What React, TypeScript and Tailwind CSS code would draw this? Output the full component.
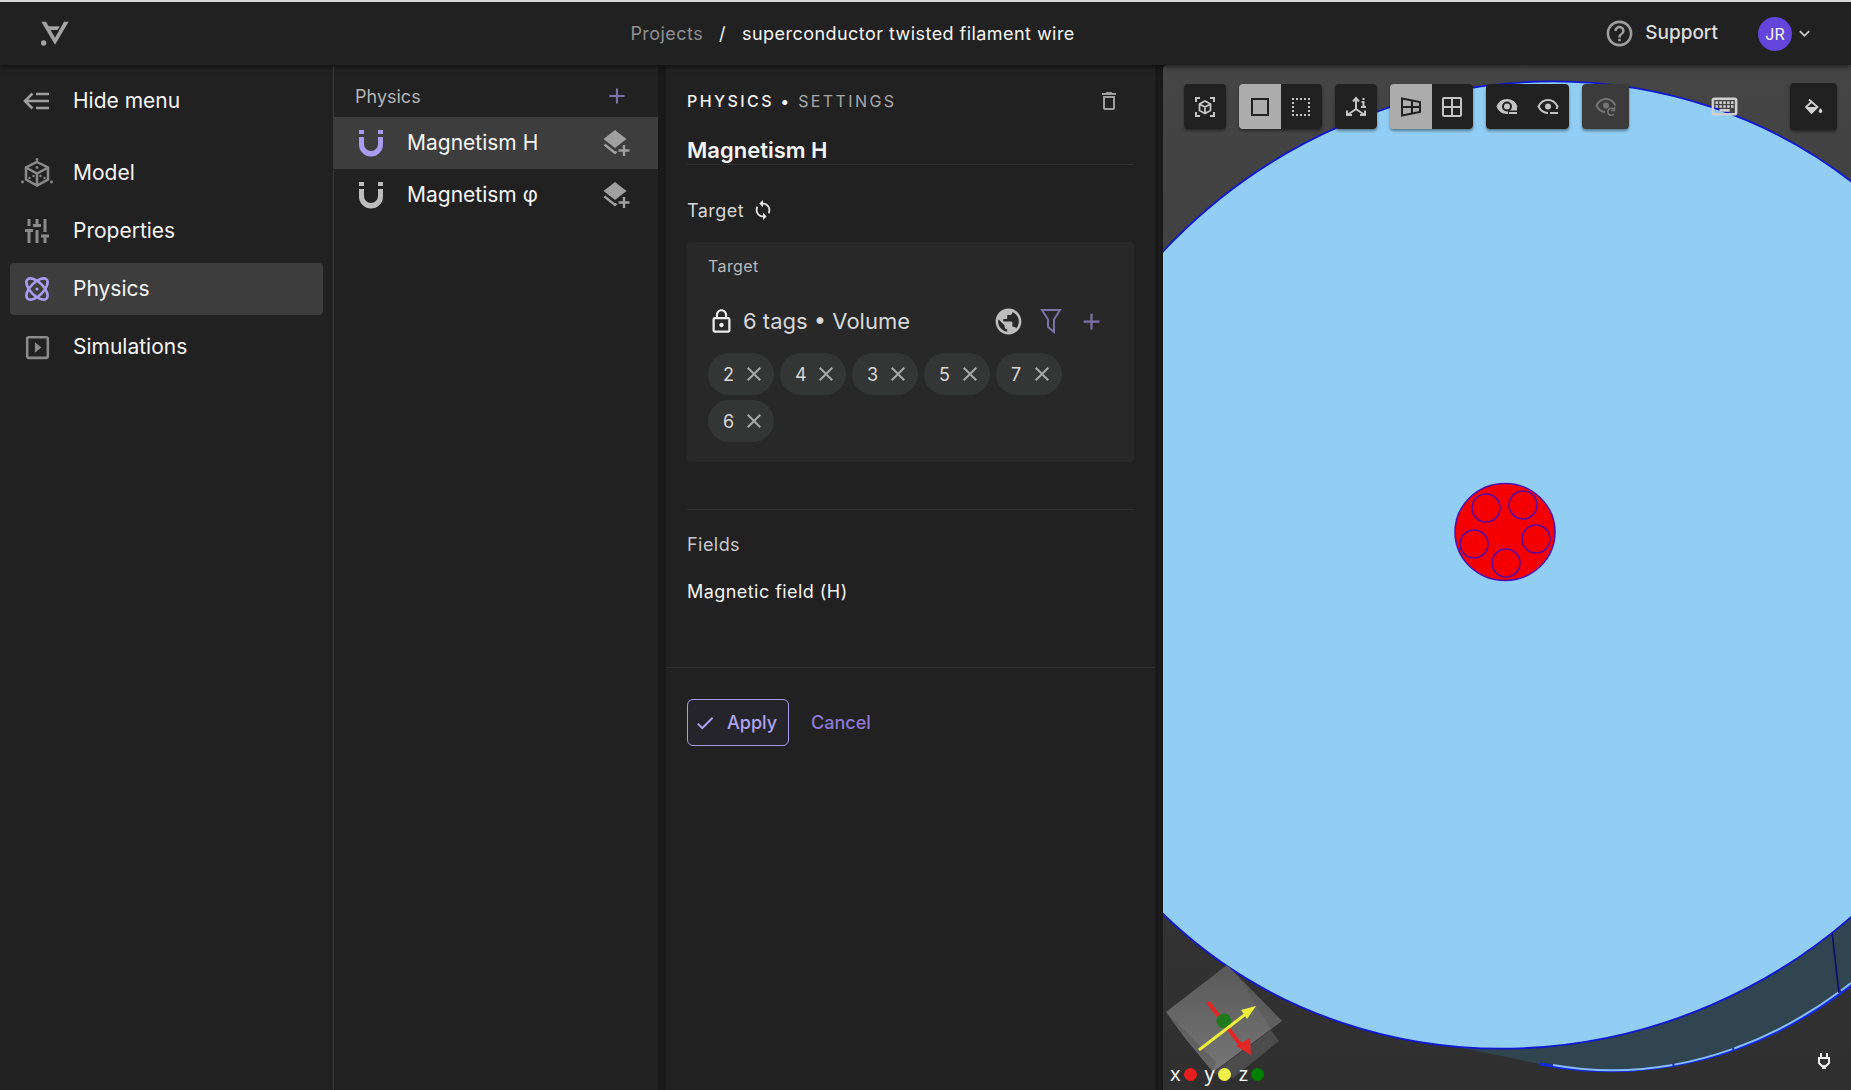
import { useState } from 'react';
import type { ReactNode } from 'react';
import {
  MdAdd,
  MdCheck,
  MdClose,
  MdDeleteOutline,
  MdHelpOutline,
  MdKeyboardArrowDown,
  MdLockOutline,
  MdOutlineKeyboard,
  MdOutlineSlideshow,
  MdPublic,
  MdSync,
} from 'react-icons/md';

interface NavItem {
  id: string;
  label: string;
  icon: ReactNode;
}

interface PhysicsItem {
  id: string;
  name: string;
}

function LogoIcon() {
  return (
    <svg width="28" height="26" viewBox="0 0 84 78" fill="#a3a3a3" aria-hidden="true">
      <path d="M1 2H15L42 50 69 2H83L42 71Z" />
      <path d="M20 16H56L50 27H28Z" />
      <circle cx="8" cy="66" r="8" />
    </svg>
  );
}

function HideMenuIcon() {
  return (
    <svg width="30" height="30" viewBox="0 0 30 30" fill="none" stroke="#9e9e9e" strokeWidth="2.600" aria-hidden="true">
      <path d="M14 8h13M3 15h24M14 22h13M10.500 7.500l-7.500 7.500 7.500 7.500" />
    </svg>
  );
}

function ModelIcon() {
  return (
    <svg width="32" height="30" viewBox="0 0 32 30" fill="none" stroke="#8a8a8a" strokeWidth="2.500" aria-hidden="true">
      <path d="M16 4 27 9.500V21.500L16 27.500 5 21.500V9.500ZM5 9.500 16 15.500 27 9.500M16 15.500V27" />
      <g fill="#8a8a8a" stroke="none">
        <circle cx="16" cy="1.500" r="1.400" />
        <circle cx="1.500" cy="24" r="1.400" />
        <circle cx="30.500" cy="24" r="1.400" />
        <circle cx="16" cy="9.500" r="1.400" />
        <circle cx="8.500" cy="20" r="1.200" />
        <circle cx="12.500" cy="18" r="1.200" />
        <circle cx="19.500" cy="18" r="1.200" />
        <circle cx="23.500" cy="20" r="1.200" />
      </g>
    </svg>
  );
}

function PropertiesIcon() {
  return (
    <svg width="30" height="30" viewBox="0 0 30 30" fill="none" stroke="#8a8a8a" strokeWidth="3" aria-hidden="true">
      <path d="M7 3v7M3 14.500h8M7 14v13M15 3v7M11 9.500h8M15 14v13M23 3v13M19 20h8M23 20v7" />
    </svg>
  );
}

function PhysicsIcon() {
  return (
    <svg width="30" height="30" viewBox="0 0 30 30" fill="none" stroke="#a99cf0" strokeWidth="2.600" aria-hidden="true">
      <ellipse cx="15" cy="15" rx="13.500" ry="6.500" transform="rotate(45 15 15)" />
      <ellipse cx="15" cy="15" rx="13.500" ry="6.500" transform="rotate(-45 15 15)" />
      <circle cx="15" cy="15" r="1.600" fill="#a99cf0" stroke="none" />
    </svg>
  );
}

function MagnetIcon({ color }: { color: string }) {
  return (
    <svg width="24" height="28" viewBox="0 0 24 28" fill={color} aria-hidden="true">
      <path d="M0 1h5v4H0zM19 1h5v4h-5zM0 8h5v7a7 7 0 0 0 14 0V8h5v7.500a12 12 0 0 1-24 0z" />
    </svg>
  );
}

function LayersPlusIcon() {
  return (
    <svg width="28" height="28" viewBox="0 0 28 28" aria-hidden="true">
      <path d="M12 1 23.500 10 12 19 .5 10Z" fill="#a0a0a0" />
      <path d="M1.500 15.500 12 24l1.500-1.500M21 16v11M15.500 21.500h11" fill="none" stroke="#a0a0a0" strokeWidth="2.400" />
    </svg>
  );
}

function FilterIcon() {
  return (
    <svg width="22" height="26" viewBox="0 0 22 26" fill="none" stroke="#7d72a8" strokeWidth="2" aria-hidden="true">
      <path d="M2 2h18l-6 9.500V24l-6-5v-7.500Z" />
    </svg>
  );
}

function FitViewIcon() {
  return (
    <svg width="20" height="20" viewBox="0 0 20 20" fill="none" stroke="#c4c4c4" strokeWidth="2" aria-hidden="true">
      <path d="M5 1H1v4M15 1h4v4M5 19H1v-4M15 19h4v-4" />
      <path d="M10 4 15.500 7v6.500L10 16.500 4.500 13.500V7ZM4.500 7 10 10l5.500-3M10 10v6" strokeWidth="1.800" />
    </svg>
  );
}

function SolidSquareIcon() {
  return (
    <svg width="20" height="20" viewBox="0 0 20 20" fill="none" stroke="#212121" strokeWidth="2" aria-hidden="true">
      <rect x="2" y="2" width="16" height="16" />
    </svg>
  );
}

function DottedSquareIcon() {
  return (
    <svg width="20" height="20" viewBox="0 0 20 20" fill="none" stroke="#c4c4c4" strokeWidth="2" aria-hidden="true">
      <path d="M1 2h18M1 18h18M2 1v18M18 1v18" strokeDasharray="2 2" />
    </svg>
  );
}

function AxesInfoIcon() {
  return (
    <svg width="22" height="22" viewBox="0 0 22 22" fill="none" stroke="#c4c4c4" strokeWidth="2" aria-hidden="true">
      <path d="M11 13V3M11 13 3 18.500M11 13l8 5.500M8 5.500 11 2l3 3.500M2 14.500v4.500h5M20 14.500v4.500h-5" />
      <path d="M18.500 2v2M16.500 6h2v5M16 11h5" />
    </svg>
  );
}

function PerspectiveIcon() {
  return (
    <svg width="22" height="20" viewBox="0 0 22 20" fill="none" stroke="#212121" strokeWidth="2" aria-hidden="true">
      <path d="M2 1.500 20 5v10L2 18.500ZM2 10h18M12 3.500v13" />
    </svg>
  );
}

function GridIcon() {
  return (
    <svg width="20" height="20" viewBox="0 0 20 20" fill="none" stroke="#c4c4c4" strokeWidth="2" aria-hidden="true">
      <rect x="1" y="1" width="18" height="18" rx="1" />
      <path d="M10 1v18M1 10h18" />
    </svg>
  );
}

function EyeMinusFilledIcon() {
  return (
    <svg width="22" height="18" viewBox="0 0 22 18" aria-hidden="true">
      <path d="M11 1C6 1 2 4 .5 8.500 2 13 6 16 11 16h1v-3h9V9.500l.5-1C20 4 16 1 11 1Z" fill="#c4c4c4" />
      <circle cx="11" cy="8.500" r="4" fill="none" stroke="#212121" strokeWidth="2" />
      <path d="M12 12.500h10v4H12z" fill="#212121" />
      <path d="M13 15h8" stroke="#c4c4c4" strokeWidth="2" />
    </svg>
  );
}

function EyeMinusIcon() {
  return (
    <svg width="22" height="18" viewBox="0 0 22 18" fill="none" stroke="#c4c4c4" strokeWidth="2" aria-hidden="true">
      <path d="M11 15C7 15 3.500 12.500 1.500 8.500 3.500 4.500 7 2 11 2s7.500 2.500 9.500 6.500L19.500 11" />
      <circle cx="11" cy="8.500" r="3" fill="#c4c4c4" stroke="none" />
      <path d="M13 15h8" />
    </svg>
  );
}

function EyeResetIcon() {
  return (
    <svg width="22" height="20" viewBox="0 0 22 20" fill="none" stroke="#757575" strokeWidth="2" aria-hidden="true">
      <path d="M10 15C7 15 3.500 12.500 1.500 8.500 3.500 4.500 7 2 11 2s7.500 2.500 9.500 6.500" />
      <circle cx="11" cy="8.500" r="3" fill="#757575" stroke="none" />
      <path d="M19 12.500a3.500 3.500 0 1 0 0 4.500M19.500 10v3.500H16" strokeWidth="1.600" />
    </svg>
  );
}

function FillIcon() {
  return (
    <svg width="18" height="18" viewBox="0 0 18 18" aria-hidden="true">
      <path d="M4 1.500 12.500 9l-6 6L1 9l6-5.500" fill="none" stroke="#d0d0d0" strokeWidth="1.800" />
      <path d="M1 9h11.500l-6 6Z" fill="#d0d0d0" />
      <path d="M15.500 10c1 1.500 1.800 2.300 1.800 3.200a1.800 1.800 0 0 1-3.600 0c0-.9.8-1.700 1.800-3.200Z" fill="#d0d0d0" />
    </svg>
  );
}

function PlugIcon() {
  return (
    <svg width="14" height="18" viewBox="0 0 14 18" fill="none" stroke="#f0f0f0" strokeWidth="2" aria-hidden="true">
      <path d="M4 1v4M10 1v4M2 6h10v5l-3 3H5l-3-3Z" />
      <path d="M5 15.500h4" strokeWidth="3" />
    </svg>
  );
}

// The meshed geometry: air cylinder, wire and its five filaments
function Scene() {
  const filaments = [
    [323, 442],
    [360, 439],
    [311, 478],
    [373, 473],
    [343, 497],
  ];

  return (
    <svg
      className="absolute inset-0 h-full w-full"
      viewBox="0 0 688 1025"
      preserveAspectRatio="xMidYMid slice"
      role="img"
      aria-label="Wire cross section"
    >
      <path d="M270 977 377 999C487 1020 595 992 688 920V800Z" fill="#304550" />
      <path d="M377 999C487 1020 595 992 688 920" fill="none" stroke="#1428d8" strokeWidth="3" />
      <path d="M390 1000C492 1018 597 989 688 918" fill="none" stroke="#86bdf5" strokeWidth="2" strokeDasharray="120 2 60 2" />
      <path d="M669 867 676 928" stroke="#06106a" strokeWidth="1.600" />
      <ellipse
        cx="0"
        cy="0"
        rx="500"
        ry="483"
        transform="translate(364 500) skewY(-2.790)"
        fill="#92cef4"
        stroke="#1018d0"
        strokeWidth="1.800"
      />
      <ellipse cx="342" cy="467" rx="50" ry="48.500" fill="#f40000" stroke="#4a10b8" strokeWidth="1.500" />
      {filaments.map(([x, y]) => (
        <circle key={`${x}-${y}`} cx={x} cy={y + 1} r="14" fill="none" stroke="#5a0aa0" strokeWidth="1.600" />
      ))}
    </svg>
  );
}

function OrientationCube() {
  return (
    <svg width="120" height="118" viewBox="0 0 120 118" role="img" aria-label="Orientation">
      <defs>
        <linearGradient id="cubeFace" x1="0" y1="0" x2="0" y2="1">
          <stop offset="0" stopColor="#5c5c5c" />
          <stop offset="1" stopColor="#7c7c7c" />
        </linearGradient>
      </defs>
      <path d="M108 66 116 77 70 114 50 109Z" fill="#4c4c4c" />
      <path d="M64 1 3 48 22 74 50 108 119 57Z" fill="url(#cubeFace)" opacity="0.920" />
      <path d="M64 1 119 57 108 65 76 14Z" fill="#555555" opacity="0.500" />
      <path d="M3 48 50 108 53 98Z" fill="#555555" opacity="0.500" />
      <path d="M45 38 80 84" stroke="#e32626" strokeWidth="4" />
      <path d="M73 82 87 74 88 91Z" fill="#e32626" />
      <circle cx="61" cy="57" r="7.500" fill="#1f7a1f" />
      <path d="M36 86 84 49" stroke="#eeee3a" strokeWidth="3" />
      <path d="M78 46 93 42 84 55Z" fill="#eeee3a" />
    </svg>
  );
}

const navItems: NavItem[] = [
  { id: 'model', label: 'Model', icon: <ModelIcon /> },
  { id: 'properties', label: 'Properties', icon: <PropertiesIcon /> },
  { id: 'physics', label: 'Physics', icon: <PhysicsIcon /> },
  { id: 'simulations', label: 'Simulations', icon: <MdOutlineSlideshow size={31} color="#8a8a8a" /> },
];

const physicsItems: PhysicsItem[] = [
  { id: 'h', name: 'Magnetism H' },
  { id: 'phi', name: 'Magnetism φ' },
];

const axes = [
  { name: 'x', dot: 'bg-[#e81e1e]' },
  { name: 'y', dot: 'bg-[#f0ee48]' },
  { name: 'z', dot: 'bg-[#008000]' },
];

function Header() {
  return (
    <header className="relative z-10 flex h-[65px] shrink-0 items-center justify-between border-t-2 border-[#d4d6d8] bg-[#212121] shadow-[0_2px_5px_rgba(0,0,0,0.5)]">
      <a href="#home" aria-label="Home" className="pr-8 pl-[41px]">
        <LogoIcon />
      </a>
      <nav aria-label="Breadcrumb" className="flex items-center gap-4 text-[18px] tracking-wide">
        <a href="#projects" className="text-[#8f8f8f]">Projects</a>
        <span>/</span>
        <span>superconductor twisted filament wire</span>
      </nav>
      <div className="flex items-center pr-9">
        <a href="#support" className="flex items-center gap-2.5 text-[19px] font-medium text-[#dedede]">
          <MdHelpOutline size={31} color="#9e9e9e" />
          Support
        </a>
        <button type="button" className="ml-10 flex items-center gap-0.5">
          <span className="flex size-[34px] items-center justify-center rounded-full bg-[#6345dc] text-[16px]">JR</span>
          <MdKeyboardArrowDown size={21} color="#c8c8c8" />
        </button>
      </div>
    </header>
  );
}

function Sidebar() {
  const [active, setActive] = useState('physics');

  return (
    <nav aria-label="Main" className="w-[334px] shrink-0 border-r border-[#3a3a3a] bg-[#212121] px-2.5 pt-2.5 text-[21px]">
      <button type="button" className="flex h-[52px] w-full items-center gap-[21px] pl-3">
        <span className="flex w-[30px] justify-center">
          <HideMenuIcon />
        </span>
        Hide menu
      </button>
      <ul className="mt-5 flex flex-col gap-1.5">
        {navItems.map((item) => (
          <li key={item.id}>
            <button
              type="button"
              onClick={() => setActive(item.id)}
              className={`flex h-[52px] w-full items-center gap-[21px] rounded pl-3 ${active === item.id ? 'bg-[#3d3d3d]' : ''}`}
            >
              <span className="flex w-[30px] shrink-0 items-center justify-center [&>svg]:shrink-0">{item.icon}</span>
              {item.label}
            </button>
          </li>
        ))}
      </ul>
    </nav>
  );
}

function PhysicsList() {
  const [selected, setSelected] = useState('h');

  return (
    <section className="w-[324px] shrink-0 bg-[#212121]">
      <div className="flex h-[52px] items-center justify-between pt-2.5 pr-7 pl-[21px]">
        <h2 className="text-[18px] text-[#b4b4b4]">Physics</h2>
        <button type="button" aria-label="Add physics">
          <MdAdd size={26} color="#7d72a8" />
        </button>
      </div>
      <ul>
        {physicsItems.map((item) => (
          <li
            key={item.id}
            className={`flex h-[52px] items-center pr-[27px] pl-[25px] ${selected === item.id ? 'bg-[#3d3d3d]' : ''}`}
          >
            <button
              type="button"
              onClick={() => setSelected(item.id)}
              className="flex flex-1 items-center gap-6 text-left text-[21px]"
            >
              <MagnetIcon color={selected === item.id ? '#a99cf0' : '#bdbdbd'} />
              {item.name}
            </button>
            <button type="button" aria-label={`Add interaction to ${item.name}`}>
              <LayersPlusIcon />
            </button>
          </li>
        ))}
      </ul>
    </section>
  );
}

function SettingsPanel() {
  const [name, setName] = useState('Magnetism H');
  const [tags, setTags] = useState([2, 4, 3, 5, 7, 6]);

  const removeTag = (tag: number) => {
    setTags(tags.filter((t) => t !== tag));
  };

  return (
    <section className="w-[489px] shrink-0 bg-[#212121]">
      <div className="border-b border-[#2e2e2e] px-[21px] pb-[61px]">
        <div className="flex h-[71px] items-center justify-between pr-[13px]">
          <h2 className="text-[16px] font-medium tracking-[0.15em]">
            PHYSICS • <span className="font-normal text-[#a8a8a8]">SETTINGS</span>
          </h2>
          <button type="button" aria-label="Delete physics">
            <MdDeleteOutline size={24} color="#9e9e9e" />
          </button>
        </div>
        <input
          aria-label="Name"
          value={name}
          onChange={(e) => setName(e.target.value)}
          className="h-[29px] w-full border-b border-[#303030] bg-transparent text-[22px] font-semibold outline-none"
        />
        <div className="mt-[31px] flex h-7 items-center gap-2 text-[18px] tracking-wide text-[#d6d6d6]">
          Target
          <MdSync size={22} color="#e6e6e6" />
        </div>
        <div className="mt-[18px] rounded bg-[#282828] px-[21px] pt-3 pb-5">
          <h3 className="text-[16px] leading-6 tracking-wide text-[#bababa]">Target</h3>
          <div className="mt-[27px] flex h-8 items-center pr-2 text-[#d8d8d8]">
            <MdLockOutline size={27} color="#ebebeb" />
            <span className="ml-2 flex-1 text-[22px]">6 tags • Volume</span>
            <div className="flex items-center gap-4">
              <button type="button" aria-label="Select all">
                <MdPublic size={31} color="#bdbdbd" />
              </button>
              <button type="button" aria-label="Filter">
                <FilterIcon />
              </button>
              <button type="button" aria-label="Add tag">
                <MdAdd size={27} color="#7d72a8" />
              </button>
            </div>
          </div>
          <ul className="mt-4 flex w-[360px] flex-wrap gap-x-1.5 gap-y-[5px]">
            {tags.map((tag) => (
              <li
                key={tag}
                className="flex h-[42px] w-[66px] items-center justify-between rounded-full bg-[#343535] pr-2 pl-[15px] text-[18px] text-[#d8d8d8]"
              >
                {tag}
                <button type="button" aria-label={`Remove tag ${tag}`} onClick={() => removeTag(tag)}>
                  <MdClose size={24} color="#a8a8a8" />
                </button>
              </li>
            ))}
          </ul>
        </div>
        <hr className="mt-[47px] border-[#2e2e2e]" />
        <h3 className="mt-[21px] text-[18px] leading-7 tracking-wide text-[#c8c8c8]">Fields</h3>
        <p className="mt-[19px] text-[18px] leading-7 tracking-wide">Magnetic field (H)</p>
      </div>
      <div className="flex items-center gap-[22px] px-[21px] pt-[31px] text-[18px] font-medium">
        <button
          type="button"
          className="flex h-[47px] items-center gap-[11px] rounded-md border border-[#a99cf0] bg-[#25242b] pr-[11px] pl-1.5 text-[#b0a4f0]"
        >
          <MdCheck size={22} />
          Apply
        </button>
        <button type="button" className="text-[#8f79d6]">Cancel</button>
      </div>
    </section>
  );
}

interface ToolButtonProps {
  label: string;
  children: ReactNode;
  active?: boolean;
}

function ToolButton({ label, children, active }: ToolButtonProps) {
  return (
    <button
      type="button"
      aria-label={label}
      className={`flex h-[45px] flex-1 items-center justify-center ${active ? 'bg-[#acacac]' : 'bg-[#212121]'}`}
    >
      {children}
    </button>
  );
}

function ToolGroup({ children, pair }: { children: ReactNode; pair?: boolean }) {
  return (
    <div className={`flex overflow-hidden rounded shadow-[0_2px_3px_rgba(0,0,0,0.4)] ${pair ? 'w-[83px]' : 'w-[42px]'}`}>
      {children}
    </div>
  );
}

function Viewport() {
  return (
    <main className="relative flex min-w-0 flex-1 flex-col justify-between overflow-hidden rounded-tl bg-linear-to-b from-[#454545] to-[#2f2f2f]">
      <Scene />
      <div className="relative flex items-center gap-[13px] pt-[18px] pr-3.5 pl-[21px]">
        <ToolGroup>
          <ToolButton label="Fit view"><FitViewIcon /></ToolButton>
        </ToolGroup>
        <ToolGroup pair>
          <ToolButton label="Solid selection" active><SolidSquareIcon /></ToolButton>
          <ToolButton label="Box selection"><DottedSquareIcon /></ToolButton>
        </ToolGroup>
        <ToolGroup>
          <ToolButton label="Axes info"><AxesInfoIcon /></ToolButton>
        </ToolGroup>
        <ToolGroup pair>
          <ToolButton label="Perspective" active><PerspectiveIcon /></ToolButton>
          <ToolButton label="Orthographic"><GridIcon /></ToolButton>
        </ToolGroup>
        <ToolGroup pair>
          <ToolButton label="Hide selected"><EyeMinusFilledIcon /></ToolButton>
          <ToolButton label="Hide others"><EyeMinusIcon /></ToolButton>
        </ToolGroup>
        <button
          type="button"
          disabled
          aria-label="Reset visibility"
          className="flex h-[45px] w-[47px] items-center justify-center rounded bg-[#3b3b3b] shadow-[0_2px_3px_rgba(0,0,0,0.4)]"
        >
          <EyeResetIcon />
        </button>
        <button type="button" aria-label="Keyboard shortcuts" className="mr-[37px] ml-auto">
          <MdOutlineKeyboard size={31} color="#d0d0d0" />
        </button>
        <button
          type="button"
          aria-label="Colours"
          className="flex size-[47px] items-center justify-center rounded bg-[#212121] shadow-[0_2px_3px_rgba(0,0,0,0.4)]"
        >
          <FillIcon />
        </button>
      </div>
      <div className="relative flex items-end justify-between pr-5">
        <div>
          <OrientationCube />
          <ul className="-mt-5 flex gap-2 pb-1 pl-[7px] font-['Noto_Sans',sans-serif] text-[20px] leading-6">
            {axes.map((axis) => (
              <li key={axis.name} className="flex items-center gap-[3px]">
                {axis.name}
                <span className={`size-[13px] rounded-full ${axis.dot}`} />
              </li>
            ))}
          </ul>
        </div>
        <button type="button" aria-label="Connection" className="pb-5">
          <PlugIcon />
        </button>
      </div>
    </main>
  );
}

export default function App() {
  return (
    <div className="flex h-screen flex-col overflow-hidden bg-[#191919] font-['Inter',sans-serif] text-[#f5f5f5]">
      <Header />
      <div className="flex min-h-0 flex-1">
        <Sidebar />
        <PhysicsList />
        <div className="ml-2 flex min-w-0 flex-1 gap-2">
          <SettingsPanel />
          <Viewport />
        </div>
      </div>
    </div>
  );
}
